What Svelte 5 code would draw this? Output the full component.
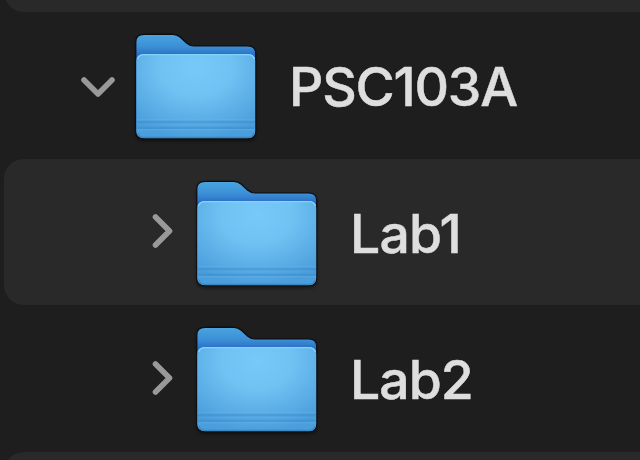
<script>
  const rows = [
    { name: 'PSC103A', open: true, depth: 0, spacing: -1.2 },
    { name: 'Lab1', open: false, depth: 1, spacing: -0.8 },
    { name: 'Lab2', open: false, depth: 1, spacing: -1.0 }
  ];
</script>

<main class="list">
  <div class="row edge"></div>
  {#each rows as row, i}
    <div class="row" class:child={row.depth === 1} class:alt={i % 2 === 1}>
      <svg class="chevron" width="36" height="36" viewBox="0 0 36 36" aria-hidden="true">
        {#if row.open}
          <path d="M4 12 18 26 32 12" />
        {:else}
          <path d="M14.5 3 28.5 17 14.5 31" />
        {/if}
      </svg>
      <svg class="folder" width="120" height="106" viewBox="0 0 120 106" aria-hidden="true">
        <defs>
          <linearGradient id="back{i}" x1="0" y1="0" x2="0" y2="1">
            <stop offset="0" stop-color="#4aa5e0" />
            <stop offset="0.12" stop-color="#3b8fd5" />
            <stop offset="0.2" stop-color="#2b6fc6" />
          </linearGradient>
          <radialGradient id="front{i}" gradientUnits="userSpaceOnUse" cx="60" cy="34" r="60" gradientTransform="translate(60 34) scale(1.5 1.18) translate(-60 -34)">
            <stop offset="0" stop-color="#78c9f8" />
            <stop offset="0.4" stop-color="#70c2f3" />
            <stop offset="1" stop-color="#4a9edb" />
          </radialGradient>
        </defs>
        <path
          d="M-.2 8Q-.2 .3 8 .3H37Q41 .3 44 3L50.500 9Q54 12 58 12H112Q119.700 12 119.700 20V97Q119.700 104.700 112 104.700H8Q-.2 104.700 -.2 97Z"
          fill="url(#back{i})" stroke="#0e0b0d" stroke-width="1.2" />
        <path d="M.3 27Q.3 20 8 20H112Q119.200 20 119.200 27V97Q119.200 104.200 112 104.200H8Q.3 104.200 .3 97Z" fill="url(#front{i})" />
        <path d="M1.500 25Q3 20.700 8 20.700H112Q117 20.700 118.500 25" fill="none" stroke="#82d3fa" stroke-width="1.3" />
        <path d="M1 88H119M1 93.800H119" stroke="#3484c3" stroke-opacity=".35" stroke-width="2.400" />
        <path d="M1 85.800H119M1 95.800H119" stroke="#67b9ed" stroke-opacity=".45" stroke-width="1" />
        <path d="M2 99Q3 103.400 8 103.400H112Q117 103.400 118 99" fill="none" stroke="#3987c2" stroke-width="1.200" />
      </svg>
      <span class="name" style:letter-spacing="{row.spacing}px">{row.name}</span>
    </div>
  {/each}
  <div class="row alt"></div>
</main>

<style>
  :global(body) { background: #1e1e1e; overflow: hidden; }
  .list {
    width: 640px;
    height: 460px;
    overflow: hidden;
    background: #1e1e1e;
  }
  .row {
    box-sizing: border-box;
    display: flex;
    align-items: center;
    height: 146.5px;
    margin-left: 4px;
    padding: 4px 0 0 76px;
    border-radius: 20px 0 0 20px;
  }
  .row.child { padding-left: 137px; }
  .alt, .edge { background: #292929; }
  .edge { margin-top: -134.5px; }
  .chevron { flex: none; margin-top: -3px; }
  .chevron path {
    fill: none;
    stroke: #999;
    stroke-width: 5.6;
    stroke-linecap: round;
    stroke-linejoin: round;
  }
  .folder {
    flex: none;
    margin-left: 20px;
    overflow: visible;
    filter: drop-shadow(0 2px 1.5px rgba(0, 0, 0, 0.4));
  }
  .name {
    margin-left: 33px;
    color: #dedede;
    font: 500 53.5px/64px Inter, "Liberation Sans", sans-serif;
    -webkit-text-stroke: 0.5px #dedede;
    white-space: nowrap;
  }
</style>
